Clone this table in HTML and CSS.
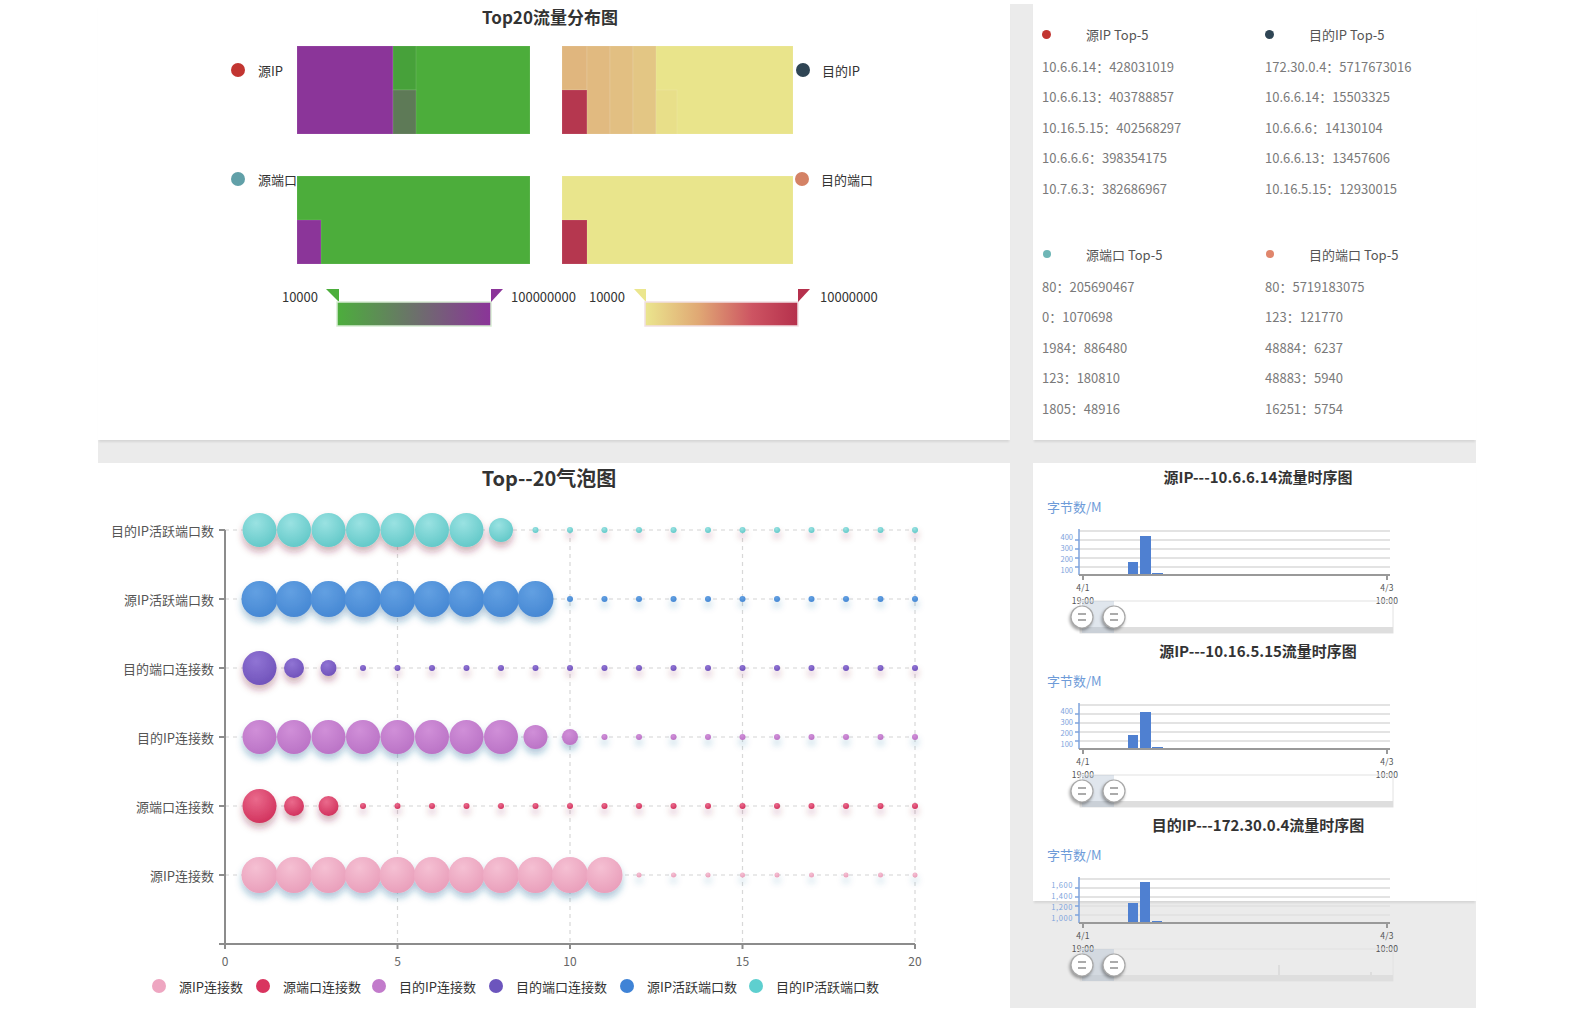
FILE: index.html
```html
<!DOCTYPE html>
<html lang="zh-CN">
<head>
<meta charset="utf-8">
<title>流量分析</title>
<link rel="stylesheet" href="styles.css">
</head>
<body>
<div class="board">

  <section class="card card-treemap">
    <h2 class="title title-md">Top20流量分布图</h2>
    <svg class="chart" width="912" height="410" viewBox="98 30 912 410">
      <defs>
        <linearGradient id="vm1" x1="0" x2="1" y1="0" y2="0">
          <stop offset="0" stop-color="#4cae3c"/>
          <stop offset="1" stop-color="#8b3499"/>
        </linearGradient>
        <linearGradient id="vm2" x1="0" x2="1" y1="0" y2="0">
          <stop offset="0" stop-color="#ebe68e"/>
          <stop offset="0.35" stop-color="#e0a874"/>
          <stop offset="0.7" stop-color="#cd5462"/>
          <stop offset="1" stop-color="#b5304c"/>
        </linearGradient>
      </defs>

      <g class="tm-legend">
        <circle cx="238" cy="70" r="7" fill="#c23531"/>
        <text x="258" y="70">源IP</text>
        <circle cx="238" cy="179" r="7" fill="#61a0a8"/>
        <text x="258" y="179">源端口</text>
        <circle cx="803" cy="70" r="7" fill="#2f4554"/>
        <text x="822" y="70">目的IP</text>
        <circle cx="802" cy="179" r="7" fill="#d48265"/>
        <text x="821" y="179">目的端口</text>
      </g>

      <g class="tm-cells">
        <rect x="297" y="46" width="233" height="88" fill="#4cad3b"/>
        <rect x="297" y="46" width="96" height="88" fill="#8b3599"/>
        <rect x="393" y="46" width="23" height="44" fill="#47a13a"/>
        <rect x="393" y="90" width="23" height="44" fill="#5e7a57"/>

        <rect x="562" y="46" width="231" height="88" fill="#e9e48b"/>
        <rect x="562" y="46" width="25" height="44" fill="#e0b67e"/>
        <rect x="562" y="90" width="25" height="44" fill="#b5374f"/>
        <rect x="587" y="46" width="23" height="88" fill="#e1ba80"/>
        <rect x="610" y="46" width="23" height="88" fill="#e2bf82"/>
        <rect x="633" y="46" width="23" height="88" fill="#e3c684"/>
        <rect x="656" y="90" width="21" height="44" fill="#e8df89"/>

        <rect x="297" y="176" width="233" height="88" fill="#4cad3b"/>
        <rect x="297" y="220" width="24" height="44" fill="#8b3599"/>

        <rect x="562" y="176" width="231" height="88" fill="#e9e58c"/>
        <rect x="562" y="220" width="25" height="44" fill="#b5374f"/>
      </g>

      <g class="vm">
        <polygon points="326,289 339,289 339,302" fill="#4cae3c"/>
        <rect x="337" y="302" width="154" height="24" fill="url(#vm1)" stroke="#d6ecd2" stroke-width="1.5"/>
        <polygon points="491,289 503,289 491,302" fill="#8b3499"/>
        <text x="318" y="296" text-anchor="end">10000</text>
        <text x="511" y="296">100000000</text>

        <polygon points="634,289 646,289 646,302" fill="#ebe68e"/>
        <rect x="645" y="302" width="153" height="24" fill="url(#vm2)" stroke="#f1dfe3" stroke-width="1.5"/>
        <polygon points="798,289 810,289 798,302" fill="#b5304c"/>
        <text x="625" y="296" text-anchor="end">10000</text>
        <text x="820" y="296">10000000</text>
      </g>
    </svg>
  </section>

  <section class="card card-top">
    <div class="toplists">
      <div class="toplist">
        <div class="toplist-head"><span class="dot dot-red"></span><span>源IP Top-5</span></div>
        <ul>
          <li>10.6.6.14：428031019</li>
          <li>10.6.6.13：403788857</li>
          <li>10.16.5.15：402568297</li>
          <li>10.6.6.6：398354175</li>
          <li>10.7.6.3：382686967</li>
        </ul>
      </div>
      <div class="toplist">
        <div class="toplist-head"><span class="dot dot-navy"></span><span>目的IP Top-5</span></div>
        <ul>
          <li>172.30.0.4：5717673016</li>
          <li>10.6.6.14：15503325</li>
          <li>10.6.6.6：14130104</li>
          <li>10.6.6.13：13457606</li>
          <li>10.16.5.15：12930015</li>
        </ul>
      </div>
      <div class="toplist">
        <div class="toplist-head"><span class="dot dot-small dot-teal"></span><span>源端口 Top-5</span></div>
        <ul>
          <li>80：205690467</li>
          <li>0：1070698</li>
          <li>1984：886480</li>
          <li>123：180810</li>
          <li>1805：48916</li>
        </ul>
      </div>
      <div class="toplist">
        <div class="toplist-head"><span class="dot dot-small dot-salmon"></span><span>目的端口 Top-5</span></div>
        <ul>
          <li>80：5719183075</li>
          <li>123：121770</li>
          <li>48884：6237</li>
          <li>48883：5940</li>
          <li>16251：5754</li>
        </ul>
      </div>
    </div>
  </section>

  <section class="card card-bubble">
    <h2 class="title title-lg">Top--20气泡图</h2>
    <svg class="chart" width="912" height="518" viewBox="98 490 912 518">
      <defs>
        <radialGradient id="gTeal" cx="0.4" cy="0.3" r="0.8"><stop offset="0" stop-color="#9ae2e2"/><stop offset="1" stop-color="#5dc6c6"/></radialGradient>
        <radialGradient id="gBlue" cx="0.4" cy="0.3" r="0.8"><stop offset="0" stop-color="#62a0e2"/><stop offset="1" stop-color="#4385d2"/></radialGradient>
        <radialGradient id="gPurple" cx="0.4" cy="0.3" r="0.8"><stop offset="0" stop-color="#9074d4"/><stop offset="1" stop-color="#6d4fb8"/></radialGradient>
        <radialGradient id="gOrchid" cx="0.4" cy="0.3" r="0.8"><stop offset="0" stop-color="#d08fd8"/><stop offset="1" stop-color="#b870c4"/></radialGradient>
        <radialGradient id="gCrimson" cx="0.4" cy="0.3" r="0.8"><stop offset="0" stop-color="#ea6a8c"/><stop offset="1" stop-color="#cf2c58"/></radialGradient>
        <radialGradient id="gPink" cx="0.4" cy="0.3" r="0.8"><stop offset="0" stop-color="#f5c0d3"/><stop offset="1" stop-color="#e89bb8"/></radialGradient>
        <filter id="shPink" x="-10%" y="-100%" width="120%" height="300%">
          <feDropShadow dx="0" dy="5" stdDeviation="3.5" flood-color="rgb(120,36,50)" flood-opacity="0.35"/>
        </filter>
        <filter id="shBlue" x="-10%" y="-100%" width="120%" height="300%">
          <feDropShadow dx="0" dy="5" stdDeviation="3.5" flood-color="rgb(25,100,150)" flood-opacity="0.35"/>
        </filter>
      </defs>

      <g class="grid-h">
        <line x1="225" x2="915" y1="530" y2="530"/>
        <line x1="225" x2="915" y1="599" y2="599"/>
        <line x1="225" x2="915" y1="668" y2="668"/>
        <line x1="225" x2="915" y1="737" y2="737"/>
        <line x1="225" x2="915" y1="806" y2="806"/>
        <line x1="225" x2="915" y1="875" y2="875"/>
      </g>
      <g class="grid-v">
        <line x1="397.5" x2="397.5" y1="530" y2="944"/>
        <line x1="570" x2="570" y1="530" y2="944"/>
        <line x1="742.5" x2="742.5" y1="530" y2="944"/>
        <line x1="915" x2="915" y1="530" y2="944"/>
      </g>

      <g class="axis">
        <line x1="225" x2="225" y1="530" y2="944"/>
        <line x1="219" x2="915" y1="944" y2="944"/>
        <line x1="219" x2="225" y1="530" y2="530"/>
        <line x1="219" x2="225" y1="599" y2="599"/>
        <line x1="219" x2="225" y1="668" y2="668"/>
        <line x1="219" x2="225" y1="737" y2="737"/>
        <line x1="219" x2="225" y1="806" y2="806"/>
        <line x1="219" x2="225" y1="875" y2="875"/>
        <line x1="225" x2="225" y1="944" y2="949"/>
        <line x1="397.5" x2="397.5" y1="944" y2="949"/>
        <line x1="570" x2="570" y1="944" y2="949"/>
        <line x1="742.5" x2="742.5" y1="944" y2="949"/>
        <line x1="915" x2="915" y1="944" y2="949"/>
      </g>

      <g class="ylabels">
        <text x="214" y="530">目的IP活跃端口数</text>
        <text x="214" y="599">源IP活跃端口数</text>
        <text x="214" y="668">目的端口连接数</text>
        <text x="214" y="737">目的IP连接数</text>
        <text x="214" y="806">源端口连接数</text>
        <text x="214" y="875">源IP连接数</text>
      </g>
      <g class="xlabels">
        <text x="225" y="960">0</text>
        <text x="397.5" y="960">5</text>
        <text x="570" y="960">10</text>
        <text x="742.5" y="960">15</text>
        <text x="915" y="960">20</text>
      </g>

      <g fill="url(#gTeal)" filter="url(#shPink)">
        <circle cx="259.5" cy="530" r="17"/><circle cx="294" cy="530" r="17"/><circle cx="328.5" cy="530" r="17"/><circle cx="363" cy="530" r="17"/><circle cx="397.5" cy="530" r="17"/><circle cx="432" cy="530" r="17"/><circle cx="466.5" cy="530" r="17"/><circle cx="501" cy="530" r="12"/>
        <circle cx="535.5" cy="530" r="3"/><circle cx="570" cy="530" r="3"/><circle cx="604.5" cy="530" r="3"/><circle cx="639" cy="530" r="3"/><circle cx="673.5" cy="530" r="3"/><circle cx="708" cy="530" r="3"/><circle cx="742.5" cy="530" r="3"/><circle cx="777" cy="530" r="3"/><circle cx="811.5" cy="530" r="3"/><circle cx="846" cy="530" r="3"/><circle cx="880.5" cy="530" r="3"/><circle cx="915" cy="530" r="3"/>
      </g>
      <g fill="url(#gBlue)" filter="url(#shBlue)">
        <circle cx="259.5" cy="599" r="18"/><circle cx="294" cy="599" r="18"/><circle cx="328.5" cy="599" r="18"/><circle cx="363" cy="599" r="18"/><circle cx="397.5" cy="599" r="18"/><circle cx="432" cy="599" r="18"/><circle cx="466.5" cy="599" r="18"/><circle cx="501" cy="599" r="18"/><circle cx="535.5" cy="599" r="18"/>
        <circle cx="570" cy="599" r="3"/><circle cx="604.5" cy="599" r="3"/><circle cx="639" cy="599" r="3"/><circle cx="673.5" cy="599" r="3"/><circle cx="708" cy="599" r="3"/><circle cx="742.5" cy="599" r="3"/><circle cx="777" cy="599" r="3"/><circle cx="811.5" cy="599" r="3"/><circle cx="846" cy="599" r="3"/><circle cx="880.5" cy="599" r="3"/><circle cx="915" cy="599" r="3"/>
      </g>
      <g fill="url(#gPurple)" filter="url(#shPink)">
        <circle cx="259.5" cy="668" r="17"/><circle cx="294" cy="668" r="10"/><circle cx="328.5" cy="668" r="8"/>
        <circle cx="363" cy="668" r="3"/><circle cx="397.5" cy="668" r="3"/><circle cx="432" cy="668" r="3"/><circle cx="466.5" cy="668" r="3"/><circle cx="501" cy="668" r="3"/><circle cx="535.5" cy="668" r="3"/><circle cx="570" cy="668" r="3"/><circle cx="604.5" cy="668" r="3"/><circle cx="639" cy="668" r="3"/><circle cx="673.5" cy="668" r="3"/><circle cx="708" cy="668" r="3"/><circle cx="742.5" cy="668" r="3"/><circle cx="777" cy="668" r="3"/><circle cx="811.5" cy="668" r="3"/><circle cx="846" cy="668" r="3"/><circle cx="880.5" cy="668" r="3"/><circle cx="915" cy="668" r="3"/>
      </g>
      <g fill="url(#gOrchid)" filter="url(#shBlue)">
        <circle cx="259.5" cy="737" r="17"/><circle cx="294" cy="737" r="17"/><circle cx="328.5" cy="737" r="17"/><circle cx="363" cy="737" r="17"/><circle cx="397.5" cy="737" r="17"/><circle cx="432" cy="737" r="17"/><circle cx="466.5" cy="737" r="17"/><circle cx="501" cy="737" r="17"/><circle cx="535.5" cy="737" r="12"/><circle cx="570" cy="737" r="8"/>
        <circle cx="604.5" cy="737" r="3"/><circle cx="639" cy="737" r="3"/><circle cx="673.5" cy="737" r="3"/><circle cx="708" cy="737" r="3"/><circle cx="742.5" cy="737" r="3"/><circle cx="777" cy="737" r="3"/><circle cx="811.5" cy="737" r="3"/><circle cx="846" cy="737" r="3"/><circle cx="880.5" cy="737" r="3"/><circle cx="915" cy="737" r="3"/>
      </g>
      <g fill="url(#gCrimson)" filter="url(#shPink)">
        <circle cx="259.5" cy="806" r="17"/><circle cx="294" cy="806" r="10"/><circle cx="328.5" cy="806" r="10"/>
        <circle cx="363" cy="806" r="3"/><circle cx="397.5" cy="806" r="3"/><circle cx="432" cy="806" r="3"/><circle cx="466.5" cy="806" r="3"/><circle cx="501" cy="806" r="3"/><circle cx="535.5" cy="806" r="3"/><circle cx="570" cy="806" r="3"/><circle cx="604.5" cy="806" r="3"/><circle cx="639" cy="806" r="3"/><circle cx="673.5" cy="806" r="3"/><circle cx="708" cy="806" r="3"/><circle cx="742.5" cy="806" r="3"/><circle cx="777" cy="806" r="3"/><circle cx="811.5" cy="806" r="3"/><circle cx="846" cy="806" r="3"/><circle cx="880.5" cy="806" r="3"/><circle cx="915" cy="806" r="3"/>
      </g>
      <g fill="url(#gPink)" filter="url(#shBlue)">
        <circle cx="259.5" cy="875" r="18"/><circle cx="294" cy="875" r="18"/><circle cx="328.5" cy="875" r="18"/><circle cx="363" cy="875" r="18"/><circle cx="397.5" cy="875" r="18"/><circle cx="432" cy="875" r="18"/><circle cx="466.5" cy="875" r="18"/><circle cx="501" cy="875" r="18"/><circle cx="535.5" cy="875" r="18"/><circle cx="570" cy="875" r="18"/><circle cx="604.5" cy="875" r="18"/>
        <circle cx="639" cy="875" r="2.5"/><circle cx="673.5" cy="875" r="2.5"/><circle cx="708" cy="875" r="2.5"/><circle cx="742.5" cy="875" r="2.5"/><circle cx="777" cy="875" r="2.5"/><circle cx="811.5" cy="875" r="2.5"/><circle cx="846" cy="875" r="2.5"/><circle cx="880.5" cy="875" r="2.5"/><circle cx="915" cy="875" r="2.5"/>
      </g>

      <g class="bubble-legend">
        <circle cx="159" cy="986" r="7" fill="#eea6c1"/><text x="179" y="986">源IP连接数</text>
        <circle cx="263" cy="986" r="7" fill="#d9345f"/><text x="283" y="986">源端口连接数</text>
        <circle cx="379" cy="986" r="7" fill="#c27bcb"/><text x="399" y="986">目的IP连接数</text>
        <circle cx="496" cy="986" r="7" fill="#6c55bd"/><text x="516" y="986">目的端口连接数</text>
        <circle cx="627" cy="986" r="7" fill="#3f83d6"/><text x="647" y="986">源IP活跃端口数</text>
        <circle cx="756" cy="986" r="7" fill="#5ecfcf"/><text x="776" y="986">目的IP活跃端口数</text>
      </g>
    </svg>
  </section>

  <section class="card card-series">
    <div class="series">
      <h3 class="series-title">源IP---10.6.6.14流量时序图</h3>
      <svg class="chart" width="443" height="150" viewBox="1033 487 443 150">
        <text class="axis-name" x="1047" y="506">字节数/M</text>
        <g class="ts-grid"><line x1="1079" x2="1390" y1="531" y2="531"/><line x1="1079" x2="1390" y1="540" y2="540"/><line x1="1079" x2="1390" y1="549" y2="549"/><line x1="1079" x2="1390" y1="558" y2="558"/><line x1="1079" x2="1390" y1="567" y2="567"/></g>
        <g class="ts-yaxis"><line x1="1079" x2="1079" y1="529" y2="575"/><line x1="1075" x2="1079" y1="540" y2="540"/><line x1="1075" x2="1079" y1="549" y2="549"/><line x1="1075" x2="1079" y1="558" y2="558"/><line x1="1075" x2="1079" y1="567" y2="567"/></g>
        <g class="ts-ylabels"><text x="1073" y="536.5">400</text><text x="1073" y="547.5">300</text><text x="1073" y="558.5">200</text><text x="1073" y="569.5">100</text></g>
        <g class="ts-bars"><rect x="1128" y="562" width="10" height="13"/><rect x="1140" y="536" width="11" height="39"/><rect x="1152" y="573" width="11" height="2"/></g>
        <g class="ts-xaxis"><line x1="1079" x2="1390" y1="575" y2="575"/><line x1="1083" x2="1083" y1="575" y2="580"/><line x1="1387" x2="1387" y1="575" y2="580"/></g>
        <g class="ts-xlabels"><text x="1083" y="586.5">4/1</text><text x="1083" y="599.5">19:00</text><text x="1387" y="586.5">4/3</text><text x="1387" y="599.5">10:00</text></g>
        <g class="slider">
          <rect class="sl-frame" x="1080" y="601" width="313" height="32"/>
          <rect class="sl-shadow" x="1080" y="627" width="313" height="6"/>
          <rect class="sl-fill" x="1082" y="601" width="32" height="32"/>
          <g class="sl-handle"><circle cx="1082" cy="617" r="11"/><line x1="1078" x2="1086" y1="614" y2="614"/><line x1="1078" x2="1086" y1="620" y2="620"/></g>
          <g class="sl-handle"><circle cx="1114" cy="617" r="11"/><line x1="1110" x2="1118" y1="614" y2="614"/><line x1="1110" x2="1118" y1="620" y2="620"/></g>
        </g>
      </svg>
    </div>
    <div class="series">
      <h3 class="series-title">源IP---10.16.5.15流量时序图</h3>
      <svg class="chart" width="443" height="150" viewBox="1033 487 443 150">
        <text class="axis-name" x="1047" y="506">字节数/M</text>
        <g class="ts-grid"><line x1="1079" x2="1390" y1="531" y2="531"/><line x1="1079" x2="1390" y1="540" y2="540"/><line x1="1079" x2="1390" y1="549" y2="549"/><line x1="1079" x2="1390" y1="558" y2="558"/><line x1="1079" x2="1390" y1="567" y2="567"/></g>
        <g class="ts-yaxis"><line x1="1079" x2="1079" y1="529" y2="575"/><line x1="1075" x2="1079" y1="540" y2="540"/><line x1="1075" x2="1079" y1="549" y2="549"/><line x1="1075" x2="1079" y1="558" y2="558"/><line x1="1075" x2="1079" y1="567" y2="567"/></g>
        <g class="ts-ylabels"><text x="1073" y="536.5">400</text><text x="1073" y="547.5">300</text><text x="1073" y="558.5">200</text><text x="1073" y="569.5">100</text></g>
        <g class="ts-bars"><rect x="1128" y="561" width="10" height="14"/><rect x="1140" y="538" width="11" height="37"/><rect x="1152" y="573" width="11" height="2"/></g>
        <g class="ts-xaxis"><line x1="1079" x2="1390" y1="575" y2="575"/><line x1="1083" x2="1083" y1="575" y2="580"/><line x1="1387" x2="1387" y1="575" y2="580"/></g>
        <g class="ts-xlabels"><text x="1083" y="586.5">4/1</text><text x="1083" y="599.5">19:00</text><text x="1387" y="586.5">4/3</text><text x="1387" y="599.5">10:00</text></g>
        <g class="slider">
          <rect class="sl-frame" x="1080" y="601" width="313" height="32"/>
          <rect class="sl-shadow" x="1080" y="627" width="313" height="6"/>
          <rect class="sl-fill" x="1082" y="601" width="32" height="32"/>
          <g class="sl-handle"><circle cx="1082" cy="617" r="11"/><line x1="1078" x2="1086" y1="614" y2="614"/><line x1="1078" x2="1086" y1="620" y2="620"/></g>
          <g class="sl-handle"><circle cx="1114" cy="617" r="11"/><line x1="1110" x2="1118" y1="614" y2="614"/><line x1="1110" x2="1118" y1="620" y2="620"/></g>
        </g>
      </svg>
    </div>
    <div class="series">
      <h3 class="series-title">目的IP---172.30.0.4流量时序图</h3>
      <svg class="chart" width="443" height="150" viewBox="1033 487 443 150">
        <text class="axis-name" x="1047" y="506">字节数/M</text>
        <g class="ts-grid"><line x1="1079" x2="1390" y1="531" y2="531"/><line x1="1079" x2="1390" y1="540" y2="540"/><line x1="1079" x2="1390" y1="549" y2="549"/><line x1="1079" x2="1390" y1="558" y2="558"/><line x1="1079" x2="1390" y1="567" y2="567"/></g>
        <g class="ts-yaxis"><line x1="1079" x2="1079" y1="529" y2="575"/><line x1="1075" x2="1079" y1="540" y2="540"/><line x1="1075" x2="1079" y1="549" y2="549"/><line x1="1075" x2="1079" y1="558" y2="558"/><line x1="1075" x2="1079" y1="567" y2="567"/></g>
        <g class="ts-ylabels ts-ylabels-wide"><text x="1073" y="536.5">1,600</text><text x="1073" y="547.5">1,400</text><text x="1073" y="558.5">1,200</text><text x="1073" y="569.5">1,000</text></g>
        <g class="ts-bars"><rect x="1128" y="555" width="10" height="20"/><rect x="1140" y="534" width="10" height="41"/><rect x="1152" y="573" width="10" height="2"/></g>
        <g class="ts-xaxis"><line x1="1079" x2="1390" y1="575" y2="575"/><line x1="1083" x2="1083" y1="575" y2="580"/><line x1="1387" x2="1387" y1="575" y2="580"/></g>
        <g class="ts-xlabels"><text x="1083" y="586.5">4/1</text><text x="1083" y="599.5">19:00</text><text x="1387" y="586.5">4/3</text><text x="1387" y="599.5">10:00</text></g>
        <g class="slider">
          <rect class="sl-frame" x="1080" y="601" width="313" height="32"/>
          <rect class="sl-shadow" x="1080" y="627" width="313" height="6"/>
          <line class="sl-spike" x1="1279" x2="1279" y1="617" y2="627"/>
          <line class="sl-spike" x1="1371" x2="1371" y1="624" y2="627"/>
          <rect class="sl-fill" x="1082" y="601" width="32" height="32"/>
          <g class="sl-handle"><circle cx="1082" cy="617" r="11"/><line x1="1078" x2="1086" y1="614" y2="614"/><line x1="1078" x2="1086" y1="620" y2="620"/></g>
          <g class="sl-handle"><circle cx="1114" cy="617" r="11"/><line x1="1110" x2="1118" y1="614" y2="614"/><line x1="1110" x2="1118" y1="620" y2="620"/></g>
        </g>
      </svg>
    </div>
  </section>

</div>
</body>
</html>
```

FILE: styles.css
```css
* {
  box-sizing: border-box;
}

html,
body {
  margin: 0;
  padding: 0;
  background: #ffffff;
}

body {
  width: 1575px;
  height: 1014px;
  overflow: hidden;
  font-family: "Noto Sans CJK SC", "Noto Sans", sans-serif;
  color: #333333;
}

.board {
  margin: 4px 0 0 98px;
  width: 1378px;
  height: 1004px;
  background: #ebebeb;
  display: grid;
  grid-template-columns: 912px 443px;
  grid-template-rows: 436px 545px;
  gap: 23px;
}

.card {
  background: #ffffff;
  box-shadow: 0 3px 2px -1px rgba(0, 0, 0, 0.09);
}

.chart {
  display: block;
  overflow: visible;
}

.chart text {
  font-family: "Noto Sans CJK SC", "Noto Sans", sans-serif;
  dominant-baseline: central;
}

.title {
  margin: 0;
  text-align: center;
  font-weight: bold;
  color: #333333;
}

.title-md {
  font-size: 17px;
  line-height: 20px;
  padding: 3px 8px 3px 0;
}

.title-lg {
  font-size: 20px;
  line-height: 24px;
  padding: 3px 10px 0 0;
}

/* treemap card */
.tm-legend text {
  font-size: 13px;
  fill: #333333;
}

.tm-cells rect {
  stroke: rgba(255, 255, 255, 0.12);
  stroke-width: 1;
}

.vm text {
  font-size: 13px;
  fill: #333333;
}

/* top-5 lists */
.toplists {
  display: grid;
  grid-template-columns: 223px 223px;
  row-gap: 34.5px;
  padding: 14.75px 0 0 9px;
}

.toplist-head {
  display: flex;
  align-items: center;
  height: 30.5px;
  margin-bottom: 2.5px;
  font-size: 13px;
  color: #555555;
  white-space: nowrap;
}

.dot {
  flex: none;
  width: 9px;
  height: 9px;
  border-radius: 50%;
  margin: 0 35px 0 0;
}

.dot-small {
  width: 8px;
  height: 8px;
  margin: 0 35px 0 1px;
}

.dot-red {
  background: #c23531;
}

.dot-navy {
  background: #2f4554;
}

.dot-teal {
  background: #6fb6b6;
}

.dot-salmon {
  background: #e0866c;
}

.toplist ul {
  list-style: none;
  margin: 0;
  padding: 0;
}

.toplist li {
  height: 30.5px;
  line-height: 30.5px;
  font-size: 13px;
  color: #7a7a7a;
  white-space: nowrap;
}

/* bubble chart */
.card-bubble {
  height: 551px;
  box-shadow: none;
}

.grid-h line {
  stroke: #e2e2e2;
  stroke-width: 1.5;
  stroke-dasharray: 4 4;
}

.grid-v line {
  stroke: #d8d8d8;
  stroke-width: 1.2;
  stroke-dasharray: 4 4;
}

.axis line {
  stroke: #8c8c8c;
  stroke-width: 2;
}

.ylabels text {
  font-size: 13px;
  fill: #555555;
  text-anchor: end;
}

.xlabels text {
  font-size: 12px;
  fill: #666666;
  text-anchor: middle;
}

.bubble-legend text {
  font-size: 13px;
  fill: #333333;
}

/* time series */
.card-series {
  align-self: start;
  height: 438px;
}

.series-title {
  margin: 0;
  padding: 4px 0 0 7px;
  font-size: 15px;
  line-height: 20px;
  font-weight: bold;
  text-align: center;
  color: #333333;
}

.axis-name {
  font-size: 13px;
  fill: #6e9bd8;
}

.ts-grid line {
  stroke: #e3e3e3;
  stroke-width: 2;
}

.ts-yaxis line {
  stroke: #7ea3dc;
  stroke-width: 1.5;
}

.ts-ylabels text {
  font-size: 7.5px;
  fill: #7ea3dc;
  text-anchor: end;
}

.ts-ylabels-wide text {
  letter-spacing: 0.6px;
}

.ts-bars rect {
  fill: #4f80d1;
}

.ts-xaxis line {
  stroke: #999999;
  stroke-width: 2;
}

.ts-xlabels text {
  font-size: 8.5px;
  fill: #555555;
  text-anchor: middle;
  letter-spacing: 0.3px;
}

.sl-frame {
  fill: none;
  stroke: #e2e2e2;
  stroke-width: 1;
}

.sl-shadow {
  fill: #dedede;
}

.sl-spike {
  stroke: #cfcfcf;
  stroke-width: 1;
}

.sl-fill {
  fill: rgba(167, 183, 204, 0.35);
}

.sl-handle circle {
  fill: #ffffff;
  stroke: #a8a8a8;
  stroke-width: 1.2;
  filter: drop-shadow(-1px 2px 1.5px rgba(0, 0, 0, 0.35));
}

.sl-handle line {
  stroke: #8f8f8f;
  stroke-width: 1.5;
}
```
